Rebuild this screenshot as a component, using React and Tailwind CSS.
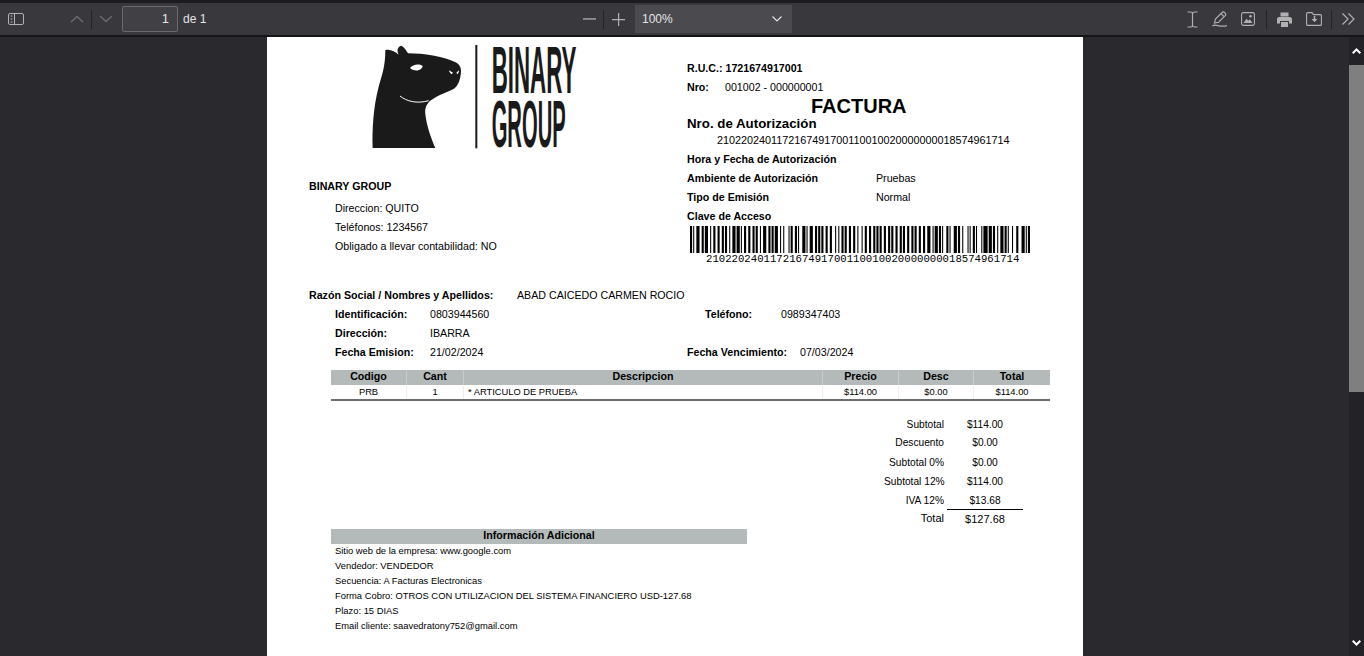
import React from "react";

const CLAVE = "2102202401172167491700110010020000000018574961714";

const CODE128 = "212222 222122 222221 121223 121322 131222 122213 122312 132212 221213 221312 231212 112232 122132 122231 113222 123122 123221 223211 221132 221231 213212 223112 312131 311222 321122 321221 312212 322112 322211 212123 212321 232121 111323 131123 131321 112313 132113 132311 211313 231113 231311 112133 112331 132131 113123 113321 133121 313121 211331 231131 213113 213311 213131 311123 311321 331121 312113 312311 332111 314111 221411 431111 111224 111422 121124 121421 141122 141221 112214 112412 122114 122411 142112 142211 241211 221114 413111 241112 134111 111242 121142 121241 114212 124112 124211 411212 421112 421211 212141 214121 412121 111143 111341 131141 114113 114311 411113 411311 113141 114131 311141 411131 211412 211214 211232 2331112".split(" ");

// code set C para los pares, ultimo digito en B
function barras(codigo) {
  const vals = [105];
  const pares = codigo.length - (codigo.length % 2);
  for (let i = 0; i < pares; i += 2) vals.push(Number(codigo.slice(i, i + 2)));
  if (codigo.length % 2) {
    vals.push(100);
    vals.push(codigo.charCodeAt(codigo.length - 1) - 32);
  }
  const check = vals.reduce((acc, v, i) => acc + v * (i === 0 ? 1 : i), 0) % 103;
  vals.push(check, 106);

  const res = [];
  let x = 0;
  vals.forEach((v) => {
    CODE128[v].split("").forEach((w, i) => {
      if (i % 2 === 0) res.push({ x, w: Number(w) });
      x += Number(w);
    });
  });
  return { res, total: x };
}

function Barcode() {
  const { res, total } = barras(CLAVE);
  return (
    <svg width="340" height="27" viewBox={`0 0 ${total} 27`} preserveAspectRatio="none" className="block ml-[3px]">
      {res.map((b, i) => (
        <rect key={i} x={b.x} y="0" width={b.w} height="27" fill="#000" />
      ))}
    </svg>
  );
}

function Logo() {
  return (
    <svg width="230" height="115" viewBox="0 0 690 345" className="block ml-[93px]">
      <path
        d="M38 324 C36 270 40 200 56 140 C66 105 76 80 76 30 C90 26 105 34 116 44 C110 32 112 20 124 17 C132 20 138 30 144 40 C190 40 250 50 285 66 C298 72 304 82 303 96 C301 118 296 136 282 146 C262 156 236 164 214 180 C200 190 194 205 196 222 C200 260 214 296 226 324 Z"
        fill="#1a1a1a"
      />
      <path d="M120 168 C140 184 170 192 206 182" stroke="#fff" strokeWidth="3" fill="none" />
      <path d="M150 84 C158 74 176 70 188 78 C186 90 168 98 150 84 Z" fill="#fff" />
      <path d="M267 91 L279 98 L275 103 C271 100 268 96 267 91 Z" fill="#fff" />
      <path d="M297 91 L289 98 L292 103 C295 100 297 96 297 91 Z" fill="#fff" />
      <rect x="346" y="15" width="6" height="310" fill="#1a1a1a" />
      <text x="395" y="160" fontFamily="'Liberation Sans', sans-serif" fontWeight="700" fontSize="202" fill="#1a1a1a" textLength="254" lengthAdjust="spacingAndGlyphs">
        BINARY
      </text>
      <text x="395" y="322" fontFamily="'Liberation Sans', sans-serif" fontWeight="700" fontSize="198" fill="#1a1a1a" textLength="222" lengthAdjust="spacingAndGlyphs">
        GROUP
      </text>
    </svg>
  );
}

function Sep({ className }) {
  return <div className={`w-px h-[19px] bg-[#232327] ${className}`} />;
}

function Toolbar() {
  return (
    <div className="h-[37px] shrink-0 bg-[#38383d] border-t-[3px] border-t-[#1c1c20] border-b-2 border-b-[#151518] flex items-center text-[#e4e4e6] text-[12px] relative">
      <svg width="16" height="12" viewBox="0 0 16 12" fill="none" stroke="#b1b1b3" strokeWidth="1" className="ml-2">
        <rect x="0.5" y="0.5" width="15" height="11" rx="1.5" />
        <path d="M6.5 0.5V11.5M2.5 3H4.5M2.5 6H4.5M2.5 9H4.5" />
      </svg>
      <svg width="14" height="8" viewBox="0 0 14 8" fill="none" stroke="#6d6d71" strokeWidth="1.3" className="ml-[46px]">
        <path d="M1 7L7 1.5L13 7" />
      </svg>
      <Sep className="ml-[7px]" />
      <svg width="14" height="8" viewBox="0 0 14 8" fill="none" stroke="#6d6d71" strokeWidth="1.3" className="ml-[7px]">
        <path d="M1 1L7 6.5L13 1" />
      </svg>
      <div className="ml-[9px] w-14 h-[26px] border border-[#6a6a6e] rounded-[2px] bg-[#404045] flex items-center justify-end pr-[8px] text-[13px]">1</div>
      <span className="ml-[5px] text-[12px] w-[22px] whitespace-nowrap">de 1</span>

      <svg width="13" height="2" viewBox="0 0 13 2" className="ml-[378px]">
        <rect width="13" height="1.3" y="0.3" fill="#b1b1b3" />
      </svg>
      <Sep className="ml-[7px]" />
      <svg width="13" height="13" viewBox="0 0 13 13" className="ml-2">
        <path d="M6 0H7.2V6H13V7.2H7.2V13H6V7.2H0V6H6Z" fill="#b1b1b3" />
      </svg>
      <div className="ml-[10px] w-[157px] h-7 bg-[#4a4a4f] flex items-center justify-between pl-[7px] pr-[10px] text-[12px]">
        <span>100%</span>
        <svg width="10" height="6" viewBox="0 0 10 6" fill="none" stroke="#e4e4e6" strokeWidth="1.2">
          <path d="M0.5 0.5L5 5L9.5 0.5" />
        </svg>
      </div>

      <svg width="11" height="17" viewBox="0 0 11 17" fill="none" stroke="#b1b1b3" strokeWidth="1.2" className="ml-[395px]">
        <path d="M0.5 1H3.5C4.5 1 5.5 1.5 5.5 2.5V14.5C5.5 15.5 4.5 16 3.5 16H0.5M10.5 1H7.5C6.5 1 5.5 1.5 5.5 2.5M10.5 16H7.5C6.5 16 5.5 15.5 5.5 14.5" />
      </svg>
      <svg width="16" height="16" viewBox="0 0 16 16" fill="none" stroke="#b1b1b3" strokeWidth="1.1" className="ml-[14px]">
        <path d="M2.5 12L3.5 8L10 1.5C10.8 0.8 11.8 0.8 12.5 1.5L13.2 2.2C13.9 3 13.9 4 13.2 4.7L6.6 11.2Z" />
        <path d="M9 2.7L12 5.7M0.5 15C2 13.5 4 14 6 14.6C9 15.3 12 15.3 15 14.6" />
      </svg>
      <svg width="14" height="14" viewBox="0 0 14 14" className="ml-[13px]">
        <rect x="0.6" y="0.6" width="12.8" height="12.8" rx="1.6" fill="none" stroke="#b1b1b3" strokeWidth="1.1" />
        <path d="M2.5 11L5.5 6.8L7.3 8.8L8.8 7.3L11.5 11Z" fill="#b1b1b3" />
        <circle cx="9.5" cy="4.3" r="1.3" fill="#b1b1b3" />
      </svg>
      <Sep className="ml-[11px]" />
      <svg width="15" height="15" viewBox="0 0 15 15" className="ml-[10px]">
        <path d="M3.5 0.5H11.5V4.5H3.5Z M2 5H13C14 5 15 6 15 7V11.5H12V9H3V11.5H0V7C0 6 1 5 2 5Z M4 10H11V15H4Z" fill="#b1b1b3" />
      </svg>
      <svg width="16" height="14" viewBox="0 0 16 14" fill="none" stroke="#b1b1b3" strokeWidth="1.1" className="ml-[14px]">
        <path d="M6 0.6H1.6C1 0.6 0.6 1 0.6 1.6V12.4C0.6 13 1 13.4 1.6 13.4H14.4C15 13.4 15.4 13 15.4 12.4V3.6C15.4 3 15 2.6 14.4 2.6H7.5Z" />
        <path d="M9.3 4V7H11.5L8.5 10.3L5.5 7H7.7V4Z" fill="#b1b1b3" stroke="none" />
      </svg>
      <Sep className="ml-[9px]" />
      <svg width="13" height="12" viewBox="0 0 13 12" fill="none" stroke="#b1b1b3" strokeWidth="1.2" className="ml-[10px]">
        <path d="M0.5 0.5L6 6L0.5 11.5M6.5 0.5L12 6L6.5 11.5" />
      </svg>
    </div>
  );
}

function Scrollbar() {
  return (
    <div className="w-[15px] shrink-0 bg-[#232327] flex flex-col items-center justify-between">
      <div className="w-full flex flex-col">
        <div className="h-7 flex items-center justify-center">
          <svg width="9" height="6" viewBox="0 0 9 6" fill="none" stroke="#fff" strokeWidth="2">
            <path d="M0.7 5.3L4.5 1.5L8.3 5.3" />
          </svg>
        </div>
        <div className="h-[327px] bg-[#7f7f7f]" />
      </div>
      <div className="h-[16px] flex items-start justify-center">
        <svg width="9" height="6" viewBox="0 0 9 6" fill="none" stroke="#fff" strokeWidth="2">
          <path d="M0.7 0.7L4.5 4.5L8.3 0.7" />
        </svg>
      </div>
    </div>
  );
}

const Fila = ({ children, className = "" }) => (
  <div className={`h-[19px] pb-[2px] flex items-center whitespace-nowrap ${className}`}>{children}</div>
);

const columnas = [
  { t: "Codigo", w: "w-[76px]" },
  { t: "Cant", w: "w-[57px]" },
  { t: "Descripcion", w: "w-[359px]" },
  { t: "Precio", w: "w-[76px]" },
  { t: "Desc", w: "w-[75px]" },
  { t: "Total", w: "w-[76px]" },
];

const totales = [
  ["Subtotal", "$114.00"],
  ["Descuento", "$0.00"],
  ["Subtotal 0%", "$0.00"],
  ["Subtotal 12%", "$114.00"],
  ["IVA 12%", "$13.68"],
];

const adicional = [
  "Sitio web de la empresa: www.google.com",
  "Vendedor: VENDEDOR",
  "Secuencia: A Facturas Electronicas",
  "Forma Cobro: OTROS CON UTILIZACION DEL SISTEMA FINANCIERO USD-127.68",
  "Plazo: 15 DIAS",
  "Email cliente: saavedratony752@gmail.com",
];

function Factura() {
  return (
    <div className="w-[816px] ml-[267px] bg-white text-black font-['Liberation_Sans',Arial,sans-serif] text-[10.67px] overflow-hidden shrink-0 pb-20">
      <div className="flex">
        <div className="w-[420px] shrink-0">
          <div className="pt-[3px]">
            <Logo />
          </div>
          <div className="pl-[42px] mt-[22px]">
            <Fila className="font-bold">BINARY GROUP</Fila>
            <div className="pl-[26px] mt-[3px]">
              <Fila>Direccion: QUITO</Fila>
              <Fila>Teléfonos: 1234567</Fila>
              <Fila>Obligado a llevar contabilidad: NO</Fila>
            </div>
          </div>
        </div>
        <div className="pt-[22px] flex-1">
          <Fila className="font-bold">R.U.C.: 1721674917001</Fila>
          <Fila>
            <span className="font-bold w-[38px]">Nro:</span>
            <span>001002 - 000000001</span>
          </Fila>
          <div className="h-[19px] pb-[2px] flex items-center font-bold text-[20px] pl-[124px]">FACTURA</div>
          <div className="h-[15px] flex items-center font-bold text-[13.3px]">Nro. de Autorización</div>
          <div className="h-[19px] flex items-center whitespace-nowrap pl-[30px] text-[10.8px]">{CLAVE}</div>
          <Fila className="font-bold">Hora y Fecha de Autorización</Fila>
          <Fila>
            <span className="font-bold w-[189px]">Ambiente de Autorización</span>
            <span>Pruebas</span>
          </Fila>
          <Fila>
            <span className="font-bold w-[189px]">Tipo de Emisión</span>
            <span>Normal</span>
          </Fila>
          <Fila className="font-bold">Clave de Acceso</Fila>
          <Barcode />
          <div className="h-[11px] pt-px leading-[10px] pl-[19px] font-['Liberation_Mono',monospace] text-[10.67px] whitespace-nowrap">{CLAVE}</div>
        </div>
      </div>

      <div className="mt-[22px] pl-[42px]">
        <Fila>
          <span className="font-bold w-[208px]">Razón Social / Nombres y Apellidos:</span>
          <span>ABAD CAICEDO CARMEN ROCIO</span>
        </Fila>
        <div className="pl-[26px]">
          <Fila>
            <span className="font-bold w-[95px]">Identificación:</span>
            <span className="w-[275px]">0803944560</span>
            <span className="font-bold w-[76px]">Teléfono:</span>
            <span>0989347403</span>
          </Fila>
          <Fila>
            <span className="font-bold w-[95px]">Dirección:</span>
            <span>IBARRA</span>
          </Fila>
          <Fila>
            <span className="font-bold w-[95px]">Fecha Emision:</span>
            <span className="w-[257px]">21/02/2024</span>
            <span className="font-bold w-[113px]">Fecha Vencimiento:</span>
            <span>07/03/2024</span>
          </Fila>
        </div>
      </div>

      <div className="mt-2 ml-[64px] w-[719px]">
        <div className="flex h-[15px] bg-[#b4baba] font-bold">
          {columnas.map((c) => (
            <div key={c.t} className={`${c.w} pb-[3px] flex items-center justify-center border-r border-r-[#c8cccc] last:border-r-0`}>
              {c.t}
            </div>
          ))}
        </div>
        <div className="flex h-4 pt-px text-[9.33px] border-b-2 border-b-[#6e6e6e]">
          <div className="w-[76px] flex items-center justify-center border-r border-r-[#eeeeee]">PRB</div>
          <div className="w-[57px] flex items-center justify-center border-r border-r-[#eeeeee]">1</div>
          <div className="w-[359px] flex items-center pl-1 border-r border-r-[#eeeeee]">* ARTICULO DE PRUEBA</div>
          <div className="w-[76px] flex items-center justify-center border-r border-r-[#eeeeee]">$114.00</div>
          <div className="w-[75px] flex items-center justify-center border-r border-r-[#eeeeee]">$0.00</div>
          <div className="w-[76px] flex items-center justify-center">$114.00</div>
        </div>
      </div>

      <div className="mt-[14px] ml-[617px] w-[139px] text-[10.2px]">
        {totales.map(([label, valor], i) => (
          <div key={label} className={`flex items-center ${i === 4 ? "h-[18px] pt-[2px]" : i === 1 ? "h-[19px] pb-[2px]" : "h-[19px]"}`}>
            <span className="w-[60px] text-right whitespace-nowrap">{label}</span>
            <span className="ml-[3px] w-[76px] text-center">{valor}</span>
          </div>
        ))}
        <div className="flex h-5 items-center text-[11px]">
          <span className="w-[60px] text-right pb-px">Total</span>
          <span className="ml-[3px] w-[76px] h-full pb-px flex items-center justify-center border-t border-t-black">$127.68</span>
        </div>
      </div>

      <div className="ml-[64px] w-[416px]">
        <div className="h-[15px] pb-[3px] bg-[#b4baba] font-bold flex items-center justify-center">Información Adicional</div>
        <div className="pl-1 text-[9.4px] -mt-px">
          {adicional.map((l) => (
            <div key={l} className="h-[15.2px] flex items-center whitespace-nowrap">
              {l}
            </div>
          ))}
        </div>
      </div>
    </div>
  );
}

export default function App() {
  return (
    <div className="w-[1364px] h-[656px] flex flex-col overflow-hidden bg-[#2a2a2e] font-['Liberation_Sans',Arial,sans-serif]">
      <Toolbar />
      <div className="flex-1 flex min-h-0">
        <div className="flex-1 min-w-0 overflow-hidden">
          <Factura />
        </div>
        <Scrollbar />
      </div>
    </div>
  );
}
